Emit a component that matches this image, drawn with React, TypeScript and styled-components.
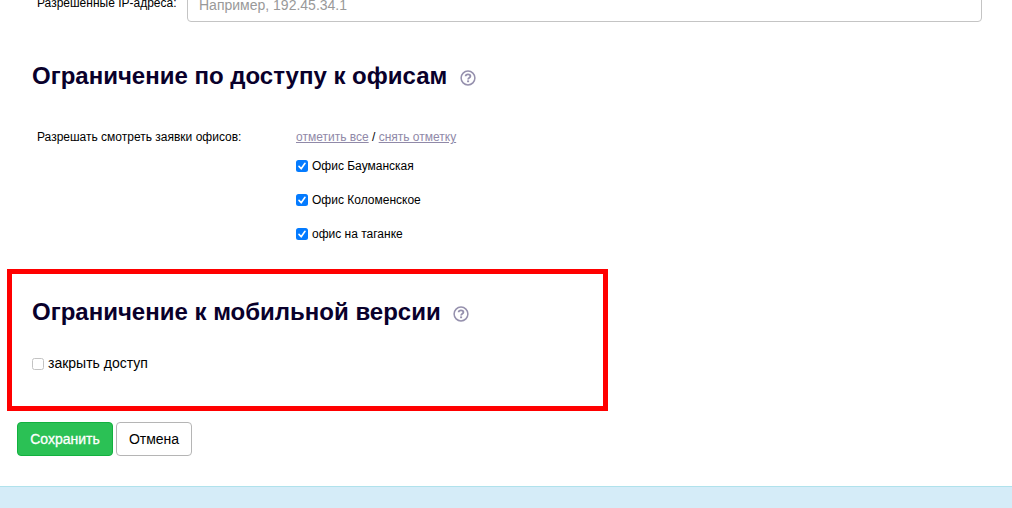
import React from "react";
import styled, { createGlobalStyle } from "styled-components";

const OFFICES = ["Офис Бауманская", "Офис Коломенское", "офис на таганке"];

const HelpIcon: React.FC = () => (
  <HelpSvg viewBox="0 0 16 16" fill="none" stroke="#9590ad">
    <circle cx="8" cy="8" r="6.9" strokeWidth="1.5" />
    <path d="M5.6 6.2C5.7 4.9 6.7 4.3 8 4.3c1.4 0 2.4.7 2.4 1.9C10.4 7.7 8.1 7.7 8.1 9.4" strokeWidth="1.8" />
    <path d="M8.1 10.4v1.8" strokeWidth="2" />
  </HelpSvg>
);

const Checkbox: React.FC<{ checked?: boolean }> = ({ checked = false }) => (
  <CheckWrap>
    <CheckInput type="checkbox" defaultChecked={checked} />
    {checked && (
      <CheckMark viewBox="0 0 12 12" fill="none" stroke="#fff">
        <path
          d="M3 6.4L5.2 8.8L9 3.3"
          strokeWidth="1.6"
          strokeLinecap="round"
          strokeLinejoin="round"
        />
      </CheckMark>
    )}
  </CheckWrap>
);

const App: React.FC = () => {
  return (
    <>
      <GlobalStyle />
      <PageStyled>
        <IpRow>
          <IpLabel>Разрешенные IP-адреса:</IpLabel>
          <IpInput placeholder="Например, 192.45.34.1" />
        </IpRow>
        <OfficeSection>
          <Title>
            <TitleText $width={415}>Ограничение по доступу к офисам</TitleText>
            <HelpIcon />
          </Title>
          <OfficeRow>
            <OfficeLabel>Разрешать смотреть заявки офисов:</OfficeLabel>
            <div>
              <Links>
                <a href="#all">отметить все</a> / <a href="#none">снять отметку</a>
              </Links>
              {OFFICES.map((office) => (
                <OfficeItem key={office}>
                  <Checkbox checked />
                  {office}
                </OfficeItem>
              ))}
            </div>
          </OfficeRow>
        </OfficeSection>
        <MobileSection>
          <Title>
            <TitleText $width={408}>Ограничение к мобильной версии</TitleText>
            <HelpIcon />
          </Title>
          <AccessItem>
            <Checkbox />
            <AccessText>закрыть доступ</AccessText>
          </AccessItem>
        </MobileSection>
        <Actions>
          <Button $primary $width={96}>
            Сохранить
          </Button>
          <Button $width={76}>Отмена</Button>
        </Actions>
        <Footer />
      </PageStyled>
    </>
  );
};

const GlobalStyle = createGlobalStyle`
  * {
    box-sizing: border-box;
  }
  body {
    margin: 0;
    background: #fff;
    color: #000;
    font-family: "Liberation Sans", Arial, sans-serif;
    font-size: 12px;
  }
`;

const PageStyled = styled.div`
  display: flex;
  flex-direction: column;
  height: 508px;
  overflow: hidden;
`;

/* the row is scrolled halfway out of the top of the view */
const IpRow = styled.div`
  display: flex;
  align-items: flex-end;
  flex: none;
  height: 22px;
  padding-left: 37px;
`;

const IpLabel = styled.label`
  width: 150px;
  line-height: 16px;
  padding-bottom: 11px;
  white-space: nowrap;
`;

const IpInput = styled.input`
  width: 795px;
  height: 34px;
  padding: 0 11px;
  border: 1px solid #c4c4c4;
  border-radius: 4px;
  font-family: inherit;
  font-size: 14px;
  &::placeholder {
    color: #999;
    opacity: 1;
  }
`;

const OfficeSection = styled.section`
  height: 247px;
  flex: none;
  padding: 38px 32px 0;
`;

const Title = styled.h2`
  display: flex;
  align-items: center;
  height: 32px;
  margin: 0;
  color: #09002b;
  font-size: 24px;
  line-height: 32px;
`;

const TitleText = styled.span<{ $width: number }>`
  width: ${({ $width }) => $width}px;
  white-space: nowrap;
`;

const HelpSvg = styled.svg`
  width: 16px;
  height: 16px;
  margin: 4px 0 0 13px;
`;

const OfficeRow = styled.div`
  display: flex;
  padding: 37px 0 0 5px;
`;

const OfficeLabel = styled.div`
  width: 259px;
  line-height: 16px;
`;

const Links = styled.div`
  height: 20px;
  line-height: 16px;
  a {
    color: #9089a8;
    text-decoration: underline;
  }
`;

const OfficeItem = styled.label`
  display: flex;
  align-items: center;
  height: 34px;
  line-height: 16px;
`;

const CheckWrap = styled.span`
  display: grid;
  flex: none;
  width: 12px;
  height: 12px;
  margin-right: 4px;
`;

const CheckInput = styled.input`
  grid-area: 1 / 1;
  appearance: none;
  width: 12px;
  height: 12px;
  margin: 0;
  border: 1px solid #c3c3c3;
  border-radius: 2.5px;
  background: #fff;
  &:checked {
    border: 0;
    background: #047bff;
  }
`;

const CheckMark = styled.svg`
  grid-area: 1 / 1;
  width: 12px;
  height: 12px;
  pointer-events: none;
`;

const MobileSection = styled.section`
  flex: none;
  width: 601px;
  height: 142px;
  margin-left: 7px;
  padding: 22px 20px 0;
  border: 5px solid #f00;
`;

const AccessItem = styled.label`
  display: flex;
  align-items: center;
  height: 20px;
  margin-top: 26px;
  font-size: 14px;
`;

const AccessText = styled.span`
  padding-bottom: 2px;
`;

const Actions = styled.div`
  display: flex;
  flex: none;
  gap: 3px;
  height: 75px;
  padding: 11px 17px 0;
`;

const Button = styled.button<{ $primary?: boolean; $width: number }>`
  width: ${({ $width }) => $width}px;
  height: 34px;
  padding: 0;
  border: 1px solid ${({ $primary }) => ($primary ? "#12b13f" : "#b5b5b5")};
  border-radius: 4px;
  background: ${({ $primary }) => ($primary ? "#2bc155" : "#fff")};
  color: ${({ $primary }) => ($primary ? "#fff" : "#000")};
  font-family: inherit;
  font-size: 14px;
  -webkit-text-stroke: ${({ $primary }) => ($primary ? "0.3px #fff" : "0")};
`;

const Footer = styled.footer`
  flex: 1;
  border-top: 1px solid #b0e2ec;
  background: #d5ecf8;
`;

export default App;
